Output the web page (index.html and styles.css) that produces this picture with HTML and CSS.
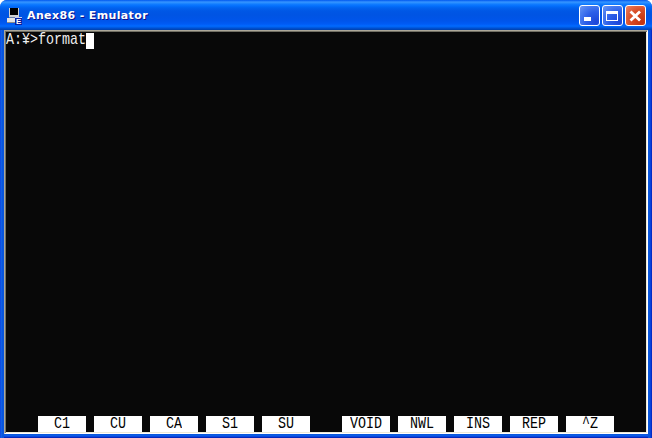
FILE: index.html
```html
<!DOCTYPE html>
<html lang="ja">
<head>
<meta charset="utf-8">
<title>Anex86 - Emulator</title>
<link rel="stylesheet" href="styles.css">
</head>
<body>
<div class="window">
  <header class="titlebar">
    <svg class="app-icon" width="15" height="17" viewBox="0 0 15 17" shape-rendering="crispEdges" aria-hidden="true">
      <rect x="2" y="0" width="10" height="9" fill="#d0d0d0"/>
      <rect x="3" y="0" width="8" height="7" fill="#000"/>
      <rect x="2" y="9" width="8" height="1" fill="#6a7fa8"/>
      <rect x="0" y="10" width="10" height="4" fill="#e4e4e4"/>
      <rect x="0" y="14" width="9" height="1" fill="#8a8a8a"/>
      <rect x="8" y="9" width="7" height="8" fill="#0a1fa0"/>
      <rect x="8" y="9" width="7" height="1" fill="#c8d0f0"/>
      <text x="9" y="16" class="badge-letter">E</text>
    </svg>
    <span class="title-text">Anex86 - Emulator</span>
    <div class="controls">
      <button class="ctl ctl-blue" aria-label="最小化">
        <svg width="21" height="21" viewBox="0 0 21 21" shape-rendering="crispEdges"><rect x="5" y="12" width="7" height="4" fill="#fff"/></svg>
      </button>
      <button class="ctl ctl-blue" aria-label="最大化">
        <svg width="21" height="21" viewBox="0 0 21 21" shape-rendering="crispEdges"><path d="M4 6h12v10H4z M5 9v6h10V9z" fill="#fff" fill-rule="evenodd"/></svg>
      </button>
      <button class="ctl ctl-red" aria-label="閉じる">
        <svg width="21" height="21" viewBox="0 0 21 21"><path d="M5.5 6.5l9.5 9M15 6.5l-9.5 9" stroke="#fff" stroke-width="2.8" fill="none"/></svg>
      </button>
    </div>
  </header>
  <main class="screen">
    <div class="prompt"><span class="tall">A:¥&gt;format</span><span class="cursor"></span></div>
    <div class="fkeys">
      <span class="fkey"><span class="tall">C1</span></span>
      <span class="fkey"><span class="tall">CU</span></span>
      <span class="fkey"><span class="tall">CA</span></span>
      <span class="fkey"><span class="tall">S1</span></span>
      <span class="fkey"><span class="tall">SU</span></span>
      <span class="fkey fkey-group"><span class="tall">VOID</span></span>
      <span class="fkey"><span class="tall">NWL</span></span>
      <span class="fkey"><span class="tall">INS</span></span>
      <span class="fkey"><span class="tall">REP</span></span>
      <span class="fkey"><span class="tall">^Z</span></span>
    </div>
  </main>
</div>
</body>
</html>
```
FILE: styles.css
```css
html, body {
  margin: 0;
  padding: 0;
  background: #fff;
}
.window {
  width: 652px;
  height: 438px;
  box-sizing: border-box;
  display: flex;
  flex-direction: column;
  padding: 0 4px 4px;
  border-radius: 7px 7px 0 0;
  background: linear-gradient(90deg, #0831d9 0, #166aee 1px, #0855dd 2px, #0855dd 3px, #0855dd 4px) left / 4px 100% no-repeat,
              linear-gradient(270deg, #0026b0 0, #0831d9 1px, #0855dd 2px, #0855dd 4px) right / 4px 100% no-repeat,
              linear-gradient(0deg, #00209c 0, #0831d9 1px, #0c5fe6 2px, #0855dd 4px) bottom / 100% 4px no-repeat,
              #0855dd;
}
.titlebar {
  height: 30px;
  margin: 0 -4px;
  padding: 0 6px 0 7px;
  box-sizing: border-box;
  display: flex;
  align-items: center;
  flex: none;
  border-radius: 7px 7px 0 0;
  background: linear-gradient(180deg, #0058ee 0, #3593ff 2px, #288eff 3px, #127dff 4px, #036ffc 6px, #0262ee 8px, #0057e5 11px, #0054e3 15px, #0055eb 21px, #005bf5 24px, #026afe 26px, #0062ef 27px, #0052d6 28px, #0040ab 30px);
}
.app-icon {
  flex: none;
  margin-top: 2px;
}
.badge-letter {
  font: bold 8px "Liberation Sans", sans-serif;
  fill: #fff;
}
.title-text {
  margin-left: 5px;
  font: bold 11px "DejaVu Sans", sans-serif;
  letter-spacing: 0.37px;
  color: #fff;
  text-shadow: 1px 1px 0 #0f1089;
  white-space: nowrap;
}
.controls {
  margin-left: auto;
  display: flex;
  gap: 2px;
  margin-top: 1px;
}
.ctl {
  width: 21px;
  height: 21px;
  padding: 0;
  box-sizing: border-box;
  border: 1px solid #fff;
  border-radius: 3px;
  display: block;
  overflow: hidden;
}
.ctl svg {
  display: block;
  margin: -1px;
}
.ctl-blue {
  background: radial-gradient(circle at 85% 85%, #1d46d8 0, #2c5ee8 45%, #4a7df0 75%, #6f97f2 100%);
}
.ctl-red {
  background: radial-gradient(circle at 85% 85%, #c2330f 0, #d64a24 50%, #e46a48 80%, #ec8a70 100%);
}
.screen {
  flex: 1;
  min-height: 0;
  box-sizing: border-box;
  display: flex;
  flex-direction: column;
  justify-content: space-between;
  padding: 1px;
  background: #080808;
  border-style: solid;
  border-width: 1px;
  border-color: #aca899 #fff #fff #aca899;
  box-shadow: inset 1px 1px 0 #716f64, inset -1px -1px 0 #ece9d8;
}
.prompt {
  display: flex;
  align-items: flex-start;
  padding-top: 1px;
  height: 16px;
  font: 13.33px/16px "Liberation Mono", monospace;
  color: #f0f0f0;
}
.tall {
  display: inline-block;
  transform: scaleY(1.18);
  transform-origin: 50% 70%;
}
.cursor {
  width: 8px;
  height: 16px;
  background: #fff;
}
.fkeys {
  display: flex;
  gap: 8px;
  padding-left: 32px;
}
.fkey {
  width: 48px;
  height: 16px;
  background: #fff;
  color: #000;
  text-align: center;
  font: 13.33px/17px "Liberation Mono", monospace;
}
.fkey-group {
  margin-left: 24px;
}
```
